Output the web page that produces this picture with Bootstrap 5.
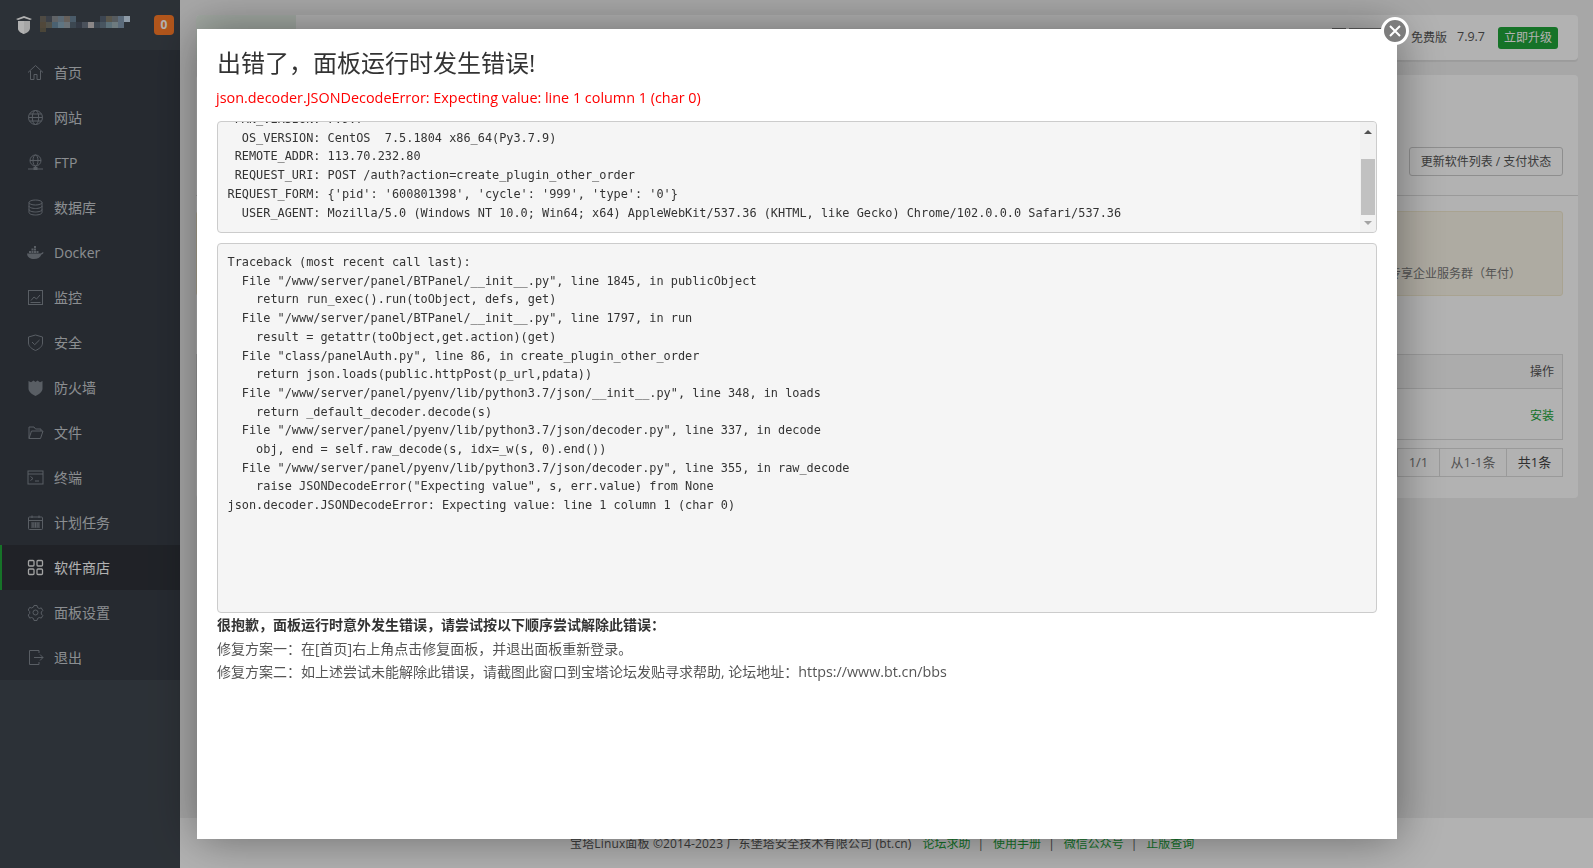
<!DOCTYPE html>
<html lang="zh-CN">
<head>
<meta charset="utf-8">
<title>宝塔Linux面板</title>
<link rel="stylesheet" href="https://cdn.jsdelivr.net/npm/bootstrap@5.3.0/dist/css/bootstrap.min.css">
<style>
html,body{height:100%;overflow:hidden}
body{font-family:"Open Sans","Noto Sans CJK SC",sans-serif;font-size:12px;color:#555;background:#f0f0f0}
.bt-page{height:868px}
.bt-side{width:180px;flex:none;background:#40474f}
.bt-head{height:50px;padding:0 6px 0 15px}
.bt-mosaic{filter:brightness(1.45);margin-left:7px}
.bt-count{width:20px;height:20px;border-radius:4px;background:#ff7b28;color:#fff;font-size:12px;font-weight:700;line-height:20px;text-align:center;margin-left:auto}
.bt-menu{background:#373d46;list-style:none;margin:0;padding:0}
.bt-menu li{height:45px;padding-left:27px;display:flex;align-items:center;gap:10px;font-size:14px;color:#c8ccd0}
.bt-menu svg{width:17px;height:17px;flex:none;color:#808790;fill:none;stroke:currentColor;stroke-width:1}
.bt-menu li.bt-on{background:#2e3239;color:#fff;box-shadow:inset 2px 0 0 #20a53a}
.bt-menu li.bt-on svg{color:#e8e8e8;stroke-width:1.3}
.bt-main{min-width:0;padding:15px 15px 0 16px;background:#f0f0f0}
.bt-top{height:45px;background:#fff;border-radius:4px;box-shadow:0 2px 1px rgba(0,0,0,.07);padding-right:20px;gap:10px}
.bt-tab{width:100px;align-self:stretch;background:#e9f3ea;border-radius:4px 0 0 0}
.bt-bit{width:14px;height:14px;border:1px solid #777;margin-top:-6px}
.bt-bar{width:32px;height:14px;background:#888;margin:-6px 0 0 -7px}
.bt-free{margin-left:20px}
.bt-ver{font-size:12.5px}
.bt-up{background:#20a53a;color:#fff;border-radius:3px;height:22px;line-height:22px;font-size:12px;margin-left:3px;width:60px;text-align:center;white-space:nowrap}
.bt-panel{height:423px;margin-top:15px;background:#fff;border-radius:4px}
.bt-tools{height:121px;padding:72px 15px 0 0;border-bottom:1px solid #ddd}
.bt-refresh{height:29px;width:154px;padding:0;font-size:12px;color:#555;border:1px solid #ccc;border-radius:3px;background:#fff;line-height:27px;text-align:center}
.bt-notice{margin:15px 15px 0 0;height:85px;background:#faf5e8;border:1px solid #f2ead0;border-radius:3px;padding:0 41px 12px 0;font-size:12px;color:#777}
.bt-grid{margin:58px 15px 0 0;height:86px;border:1px solid #ddd}
.bt-grid-h{height:34px;background:#f6f6f6;border-bottom:1px solid #ddd;padding-right:8px;color:#555;font-size:12px}
.bt-grid-r{height:50px;padding:3px 8px 0 0;color:#20a53a;font-size:12px}
.bt-pages{margin:8px 15px 0 0;height:29px;font-size:13px;color:#777}
.bt-pages span{border:1px solid #ddd;margin-left:-1px;height:29px;line-height:27px;text-align:center}
.bt-p1{width:43px}
.bt-p2{width:68px}
.bt-pages .bt-p3{width:57px;color:#444}
.bt-foot{height:50px;margin:auto -15px 0 -16px;padding-top:17px;background:#fff;font-size:12px;color:#555;line-height:18px;padding-left:390px;white-space:nowrap}
.bt-foot b{font-weight:400;letter-spacing:.15px}
.bt-foot a{color:#20a53a;text-decoration:none}
.bt-foot i{font-style:normal;margin:0 9px 0 7px}
.bt-foot i.bt-gap{margin:0 6px 0 5px}
.bt-shade{position:fixed;inset:0;background:rgba(0,0,0,.3)}
.bt-layer{position:fixed;left:197px;top:29px;width:1200px;height:810px;background:#fff;box-shadow:0 0 45px rgba(0,0,0,.42);padding:17px 20px 0;color:#555}
.bt-close{position:absolute;right:-12px;top:-12px;width:28px;height:28px;border-radius:50%;background:#7d7d7d;border:3px solid #fff;display:flex;align-items:center;justify-content:center}
.bt-title{font-size:24px;line-height:34px;font-weight:400;color:#333;margin:0}
.bt-err{font-size:14.4px;line-height:20px;color:#f00;margin:8px 0 13px -1px}
.bt-code{font-family:"DejaVu Sans Mono","Liberation Mono",monospace;font-size:11.88px;line-height:18.7px;color:#333;background:#f5f5f5;border:1px solid #ccc;border-radius:4px;margin:0;padding:0 9.5px;overflow:hidden;position:relative;white-space:pre}
.bt-code-a{height:112px;margin-bottom:10px}
.bt-code-a div{margin-top:-12px}
.bt-code-b{height:370px;padding-top:9px}
.bt-sb{position:absolute;right:0;top:0;bottom:0;width:16px;background:#f1f1f1;border-radius:0 3px 3px 0}
.bt-thumb{position:absolute;left:1px;right:1px;top:37px;height:56px;background:#c1c1c1}
.bt-up-arr,.bt-dn-arr{position:absolute;left:4px;width:0;height:0;border:4px solid transparent}
.bt-up-arr{top:4px;border-bottom-color:#505050}
.bt-dn-arr{bottom:3px;border-top-color:#a3a3a3}
.bt-note{font-size:14px;line-height:23.7px;margin:0;color:#555}
.bt-note-b{font-weight:700;color:#333}
.bt-url{font-size:14.3px}
</style>
</head>
<body>
<div class="bt-page d-flex">
  <aside class="bt-side d-flex flex-column">
    <div class="bt-head d-flex align-items-center">
      <svg width="18" height="20" viewBox="0 0 18 20"><path d="M1 4 9 1l8 3-2 1-6-2-6 2z" fill="#fff"/><path d="M3 6h12v7c0 3-3 5-6 6-3-1-6-3-6-6z" fill="#eee"/><path d="M9 6v13c-3-1-6-3-6-6V6z" fill="#fff"/></svg>
      <svg class="bt-mosaic" width="96" height="18" viewBox="0 0 96 18">
        <g><rect x="0" y="0" width="6" height="6" fill="#4d4a42"/><rect x="6" y="0" width="6" height="6" fill="#3a3f46"/><rect x="12" y="0" width="6" height="6" fill="#5f6265"/><rect x="18" y="0" width="6" height="6" fill="#5a6873"/><rect x="24" y="0" width="6" height="6" fill="#655f5a"/><rect x="30" y="0" width="6" height="6" fill="#4a5a68"/><rect x="60" y="0" width="6" height="6" fill="#3c4550"/><rect x="66" y="0" width="6" height="6" fill="#58554c"/><rect x="72" y="0" width="6" height="6" fill="#555a5e"/><rect x="78" y="0" width="6" height="12" fill="#5a6a7a"/><rect x="84" y="0" width="6" height="6" fill="#8d99a5"/></g>
        <g><rect x="0" y="6" width="6" height="6" fill="#50483a"/><rect x="6" y="6" width="6" height="6" fill="#51504a"/><rect x="12" y="6" width="6" height="6" fill="#4a6070"/><rect x="18" y="6" width="6" height="6" fill="#5e7481"/><rect x="24" y="6" width="6" height="6" fill="#6a7176"/><rect x="30" y="6" width="6" height="6" fill="#3c4650"/><rect x="36" y="6" width="6" height="6" fill="#343a45"/><rect x="42" y="6" width="6" height="6" fill="#4a505a"/><rect x="48" y="6" width="6" height="6" fill="#8a8686"/><rect x="54" y="6" width="6" height="6" fill="#3d4650"/><rect x="60" y="6" width="6" height="6" fill="#47545f"/><rect x="66" y="6" width="6" height="6" fill="#5c6f78"/><rect x="72" y="6" width="6" height="6" fill="#6d7a7e"/><rect x="0" y="12" width="6" height="4" fill="#4a4438"/></g>
      </svg>
      <div class="bt-count">0</div>
    </div>
    <ul class="bt-menu">
      <li><svg viewBox="0 0 17 17"><path d="M1 8.500 8.500 1.500 16 8.500M3.500 7v8.500h3.500v-5h3v5h3.500V7"/></svg>首页</li>
      <li><svg viewBox="0 0 17 17"><circle cx="8.500" cy="8.500" r="7"/><ellipse cx="8.500" cy="8.500" rx="3.200" ry="7"/><path d="M1.500 8.500h14M2.500 5h12M2.500 12h12"/></svg>网站</li>
      <li><svg viewBox="0 0 17 17"><circle cx="8.500" cy="6.500" r="5.500"/><ellipse cx="8.500" cy="6.500" rx="2.500" ry="5.500"/><path d="M3 6.500h11M8.500 12v2.500M1 15h15"/><rect x="7" y="13.500" width="3" height="2" fill="currentColor"/></svg>FTP</li>
      <li><svg viewBox="0 0 17 17"><ellipse cx="8.500" cy="3.500" rx="6.500" ry="2.500"/><path d="M2 3.500v10c0 1.400 3 2.500 6.500 2.500s6.500-1.100 6.500-2.500v-10M2 7c0 1.400 3 2.500 6.500 2.500S15 8.400 15 7M2 10.500c0 1.400 3 2.500 6.500 2.500s6.500-1.100 6.500-2.500"/></svg>数据库</li>
      <li><svg viewBox="0 0 17 17"><path fill="currentColor" stroke="none" d="M0 9.500h13.500c.8 0 1.500-.7 1.700-1.200l1.500.2c-.5 1.300-1.400 1.800-2.300 1.900C13.300 13.500 10.500 15 7 15 3 15 .3 13 0 9.500zM2 7h2v2H2zM4.500 7h2v2h-2zM7 7h2v2H7zM9.500 7h2v2h-2zM4.500 4.500h2v2h-2zM7 4.500h2v2H7zM7 2h2v2H7z"/></svg>Docker</li>
      <li><svg viewBox="0 0 17 17"><rect x="1.500" y="1.500" width="14" height="14"/><path d="M4 11.500 7 8l2.500 2L13 6M3.500 13.500h10"/></svg>监控</li>
      <li><svg viewBox="0 0 17 17"><path d="M8.500 1 15.500 3v6c0 3.500-3.500 6-7 7.500C5 15 1.500 12.500 1.500 9V3zM5 8l2.700 2.700L12.500 6"/></svg>安全</li>
      <li><svg viewBox="0 0 17 17"><path fill="currentColor" stroke="none" d="M1.500 2 4 3.200 6.500 1.500l2 1.500 2-1.500L13 3.200 15.500 2v7.500c0 3.200-3.200 5.800-7 7.500-3.800-1.700-7-4.300-7-7.500z"/></svg>防火墙</li>
      <li><svg viewBox="0 0 17 17"><path d="M2 14.500V3h5l1.500 2H14v2M2 14.500h11.500L16 7H4.500z"/></svg>文件</li>
      <li><svg viewBox="0 0 17 17"><rect x="1" y="2" width="15" height="13"/><path d="M1 5h15M3.500 7.500 6 9.500l-2.500 2M8 12h4"/></svg>终端</li>
      <li><svg viewBox="0 0 17 17"><rect x="1.500" y="3" width="14" height="12.500" rx="1"/><path d="M1.500 6.500h14M5 1.500V4M12 1.500V4M4 9h9M4 11h9M4 13h9M6 8.500v5M8.500 8.500v5M11 8.500v5"/></svg>计划任务</li>
      <li class="bt-on"><svg viewBox="0 0 17 17"><rect x="1.500" y="1.500" width="5.500" height="5.500" rx="1"/><rect x="10" y="1.500" width="5.500" height="5.500" rx="1"/><rect x="1.500" y="10" width="5.500" height="5.500" rx="1"/><rect x="10" y="10" width="5.500" height="5.500" rx="1"/></svg>软件商店</li>
      <li><svg viewBox="0 0 17 17"><circle cx="8.500" cy="8.500" r="2.500"/><path d="M7 1.500h3l.5 2 1.800 1 2-.6 1.500 2.600-1.500 1.500v2l1.500 1.500-1.500 2.600-2-.6-1.800 1-.5 2H7l-.5-2-1.800-1-2 .6L1.200 11l1.500-1.500v-2L1.200 6l1.500-2.600 2 .6 1.800-1z"/></svg>面板设置</li>
      <li><svg viewBox="0 0 17 17"><path d="M12 4V1.500H2.500v14H12V13M7 8.500h9M13 5.500l3 3-3 3"/></svg>退出</li>
    </ul>
  </aside>
  <main class="bt-main flex-grow-1 d-flex flex-column">
    <div class="bt-top d-flex align-items-center">
      <div class="bt-tab"></div>
      <div class="bt-bit ms-auto"></div>
      <div class="bt-bar"></div>
      <span class="bt-free">免费版</span>
      <span class="bt-ver">7.9.7</span>
      <span class="bt-up">立即升级</span>
    </div>
    <section class="bt-panel">
      <div class="bt-tools d-flex justify-content-end"><div class="bt-refresh">更新软件列表 / 支付状态</div></div>
      <div class="bt-notice d-flex align-items-end justify-content-end">专享企业服务群（年付）</div>
      <div class="bt-grid">
        <div class="bt-grid-h d-flex align-items-center justify-content-end">操作</div>
        <div class="bt-grid-r d-flex align-items-center justify-content-end">安装</div>
      </div>
      <div class="bt-pages d-flex justify-content-end">
        <span class="bt-p1">1/1</span><span class="bt-p2">从1-1条</span><span class="bt-p3">共1条</span>
      </div>
    </section>
    <footer class="bt-foot"><b>宝塔Linux面板 ©2014-2023 广东堡塔安全技术有限公司 (bt.cn)</b><i class="bt-gap"></i><a href="#">论坛求助</a><i>|</i><a href="#">使用手册</a><i>|</i><a href="#">微信公众号</a><i>|</i><a href="#">正版查询</a></footer>
  </main>
</div>
<div class="bt-shade"></div>
<div class="bt-layer">
  <div class="bt-close"><svg width="14" height="14" viewBox="0 0 14 14"><path d="M2 2l10 10M12 2 2 12" stroke="#fff" stroke-width="2" fill="none"/></svg></div>
  <h1 class="bt-title">出错了，面板运行时发生错误!</h1>
  <p class="bt-err">json.decoder.JSONDecodeError: Expecting value: line 1 column 1 (char 0)</p>
  <pre class="bt-code bt-code-a"><div> PAN_VERSION: 7.9.7
  OS_VERSION: CentOS  7.5.1804 x86_64(Py3.7.9)
 REMOTE_ADDR: 113.70.232.80
 REQUEST_URI: POST /auth?action=create_plugin_other_order
REQUEST_FORM: {'pid': '600801398', 'cycle': '999', 'type': '0'}
  USER_AGENT: Mozilla/5.0 (Windows NT 10.0; Win64; x64) AppleWebKit/537.36 (KHTML, like Gecko) Chrome/102.0.0.0 Safari/537.36</div><span class="bt-sb"><span class="bt-up-arr"></span><span class="bt-thumb"></span><span class="bt-dn-arr"></span></span></pre>
  <pre class="bt-code bt-code-b">Traceback (most recent call last):
  File "/www/server/panel/BTPanel/__init__.py", line 1845, in publicObject
    return run_exec().run(toObject, defs, get)
  File "/www/server/panel/BTPanel/__init__.py", line 1797, in run
    result = getattr(toObject,get.action)(get)
  File "class/panelAuth.py", line 86, in create_plugin_other_order
    return json.loads(public.httpPost(p_url,pdata))
  File "/www/server/panel/pyenv/lib/python3.7/json/__init__.py", line 348, in loads
    return _default_decoder.decode(s)
  File "/www/server/panel/pyenv/lib/python3.7/json/decoder.py", line 337, in decode
    obj, end = self.raw_decode(s, idx=_w(s, 0).end())
  File "/www/server/panel/pyenv/lib/python3.7/json/decoder.py", line 355, in raw_decode
    raise JSONDecodeError("Expecting value", s, err.value) from None
json.decoder.JSONDecodeError: Expecting value: line 1 column 1 (char 0)</pre>
  <p class="bt-note bt-note-b">很抱歉，面板运行时意外发生错误，请尝试按以下顺序尝试解除此错误：</p>
  <p class="bt-note">修复方案一：在[首页]右上角点击修复面板，并退出面板重新登录。</p>
  <p class="bt-note">修复方案二：如上述尝试未能解除此错误，请截图此窗口到宝塔论坛发贴寻求帮助, 论坛地址：<span class="bt-url">https://www.bt.cn/bbs</span></p>
</div>
<script src="https://cdn.jsdelivr.net/npm/bootstrap@5.3.0/dist/js/bootstrap.bundle.min.js"></script>
</body>
</html>
